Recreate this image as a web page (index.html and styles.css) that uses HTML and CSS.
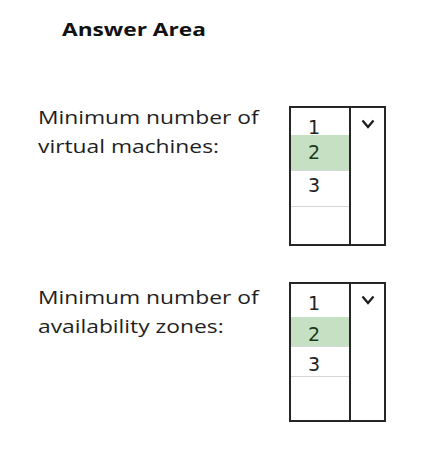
FILE: index.html
```html
<!DOCTYPE html>
<html>
<head>
<meta charset="utf-8">
<link rel="stylesheet" href="styles.css">
</head>
<body>
<div class="page">
  <h1 class="title"><span class="wide-title">Answer Area</span></h1>
  <div class="question q1">
    <div class="label"><span class="wide">Minimum number of</span><br><span class="wide">virtual machines:</span></div>
    <div class="dropdown dd-a">
      <div class="options">
        <div class="opt">1</div>
        <div class="opt sel">2</div>
        <div class="opt">3</div>
        <div class="opt"></div>
      </div>
      <div class="arrow">
        <svg width="14" height="10" viewBox="0 0 14 10"><path d="M1.5 1.5 L7 8 L12.5 1.5" fill="none" stroke="#1a1a1a" stroke-width="2.2"/></svg>
      </div>
    </div>
  </div>
  <div class="question q2">
    <div class="label"><span class="wide">Minimum number of</span><br><span class="wide">availability zones:</span></div>
    <div class="dropdown dd-b">
      <div class="options">
        <div class="opt">1</div>
        <div class="opt sel">2</div>
        <div class="opt">3</div>
        <div class="opt"></div>
      </div>
      <div class="arrow">
        <svg width="14" height="10" viewBox="0 0 14 10"><path d="M1.5 1.5 L7 8 L12.5 1.5" fill="none" stroke="#1a1a1a" stroke-width="2.2"/></svg>
      </div>
    </div>
  </div>
</div>
</body>
</html>
```

FILE: styles.css
```css
html, body {
  margin: 0;
  padding: 0;
  background: #ffffff;
}

.page {
  width: 423px;
  height: 453px;
  font-family: "Open Sans", "Liberation Sans", sans-serif;
  color: #1c1c1c;
  padding: 17px 0 0 38px;
  box-sizing: border-box;
}

.title {
  margin: 0 0 0 24px;
  font-size: 18px;
  line-height: 24px;
  font-weight: 700;
  color: #111;
}

.wide-title {
  display: inline-block;
  transform: scaleX(1.26);
  transform-origin: left center;
}

.question {
  display: flex;
  align-items: flex-start;
}

.q1 {
  margin-top: 60px;
}

.q2 {
  margin-top: 31px;
}

.label {
  width: 251px;
  font-size: 19px;
  line-height: 29px;
  color: #1e1e1e;
  padding-top: 2px;
}

.q2 .label {
  padding-top: 6px;
}

.wide {
  display: inline-block;
  transform: scaleX(1.2);
  transform-origin: left center;
  white-space: nowrap;
}

.dropdown {
  margin-top: 5px;
  display: flex;
  border: 2px solid #262626;
  width: 97px;
  box-sizing: border-box;
}

.options {
  width: 58px;
  display: grid;
  border-right: 2px solid #262626;
}

.dd-a .options {
  grid-template-rows: 27px 35px 36px 38px;
}

.dd-b .options {
  grid-template-rows: 33px 29px 30px 44px;
}

.opt {
  font-family: "DejaVu Sans", "Open Sans", sans-serif;
  font-size: 19px;
  line-height: 20px;
  padding: 7px 0 0 17px;
  border-top: 1px solid #d6d6d6;
  color: #222;
}

.opt:first-child {
  border-top: none;
  padding-top: 9px;
}

.opt.sel {
  background: #c6e0c3;
  border-top: none;
  color: #1d3a1d;
}

.dd-a .opt:nth-child(3) {
  padding-top: 4px;
}

.arrow {
  flex: 1;
  display: flex;
  justify-content: center;
  align-items: flex-start;
  padding-top: 11px;
}

.arrow svg {
  display: block;
}
```
